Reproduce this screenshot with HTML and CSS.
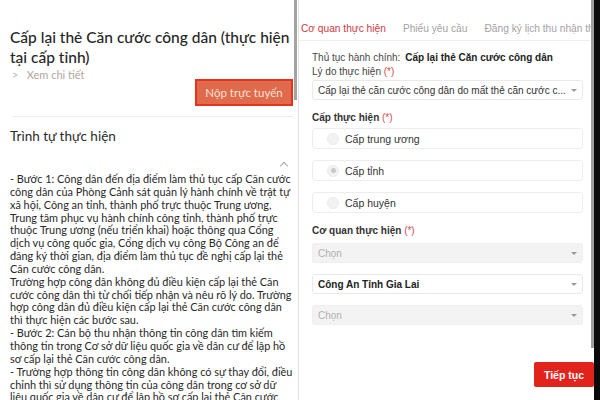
FILE: index.html
```html
<!DOCTYPE html>
<html lang="vi">
<head>
  <meta charset="UTF-8">
  <meta name="viewport" content="width=device-width, initial-scale=1.0">
  <title>Cấp lại thẻ Căn cước công dân</title>
  <link rel="stylesheet" href="styles.css">
</head>
<body>
  <div class="screen">
    <!-- Chi tiết thủ tục -->
    <section class="pane detail">
      <h1 class="detail-title">Cấp lại thẻ Căn cước công dân (thực hiện tại cấp tỉnh)</h1>
      <div class="head-row">
        <a class="more-link" href="#"><span class="more-caret">&gt;</span> Xem chi tiết</a>
        <button class="btn-submit">Nộp trực tuyến</button>
      </div>

      <h2 class="section-title">Trình tự thực hiện</h2>
      <div class="collapse-row"><span class="collapse-icon"></span></div>
      <div class="steps">
        <p>- Bước 1: Công dân đến địa điểm làm thủ tục cấp Căn cước<br>
        công dân của Phòng Cảnh sát quản lý hành chính về trật tự<br>
        xã hội, Công an tỉnh, thành phố trực thuộc Trung ương,<br>
        Trung tâm phục vụ hành chính công tỉnh, thành phố trực<br>
        thuộc Trung ương (nếu triển khai) hoặc thông qua Cổng<br>
        dịch vụ công quốc gia, Cổng dịch vụ công Bộ Công an để<br>
        đăng ký thời gian, địa điểm làm thủ tục đề nghị cấp lại thẻ<br>
        Căn cước công dân.</p>
        <p>Trường hợp công dân không đủ điều kiện cấp lại thẻ Căn<br>
        cước công dân thì từ chối tiếp nhận và nêu rõ lý do. Trường<br>
        hợp công dân đủ điều kiện cấp lại thẻ Căn cước công dân<br>
        thì thực hiện các bước sau.</p>
        <p>- Bước 2: Cán bộ thu nhận thông tin công dân tìm kiếm<br>
        thông tin trong Cơ sở dữ liệu quốc gia về dân cư để lập hồ<br>
        sơ cấp lại thẻ Căn cước công dân.</p>
        <p>- Trường hợp thông tin công dân không có sự thay đổi, điều<br>
        chỉnh thì sử dụng thông tin của công dân trong cơ sở dữ<br>
        liệu quốc gia về dân cư để lập hồ sơ cấp lại thẻ Căn cước</p>
      </div>
      <div class="scroll-thumb left-thumb"></div>
    </section>

    <!-- Form nộp hồ sơ -->
    <section class="pane form">
      <nav class="tabs">
        <span class="tab active">Cơ quan thực hiện</span>
        <span class="tab">Phiếu yêu cầu</span>
        <span class="tab">Đăng ký lịch thu nhận thông tin</span>
      </nav>

      <div class="form-body">
        <div class="info-line">Thủ tục hành chính: <b>Cấp lại thẻ Căn cước công dân</b></div>
        <label class="field-label">Lý do thực hiện <span class="req">(*)</span></label>
        <div class="select"><span class="select-text">Cấp lại thẻ căn cước công dân do mất thẻ căn cước c...</span><span class="caret"></span></div>

        <label class="field-label strong">Cấp thực hiện <span class="req">(*)</span></label>
        <div class="radio-list">
          <div class="radio-item"><span class="radio"></span>Cấp trung ương</div>
          <div class="radio-item"><span class="radio checked"></span>Cấp tỉnh</div>
          <div class="radio-item"><span class="radio"></span>Cấp huyện</div>
        </div>

        <label class="field-label strong">Cơ quan thực hiện <span class="req">(*)</span></label>
        <div class="select-list">
          <div class="select disabled"><span class="select-text">Chọn</span><span class="caret"></span></div>
          <div class="select"><span class="select-text value">Công An Tỉnh Gia Lai</span><span class="caret"></span></div>
          <div class="select disabled"><span class="select-text">Chọn</span><span class="caret"></span></div>
        </div>

        <div class="actions">
          <button class="btn-next">Tiếp tục</button>
        </div>
      </div>
      <div class="scroll-thumb right-thumb"></div>
    </section>

    <div class="edge"></div>
  </div>
</body>
</html>
```

FILE: styles.css
```css
body {
  margin: 0;
  padding: 0;
  background: #fff;
}
.screen {
  display: flex;
  width: 600px;
  height: 400px;
  overflow: hidden;
}
.pane {
  position: relative;
  height: 400px;
  overflow: hidden;
  box-sizing: border-box;
}

/* Pannello sinistro: dettaglio */
.detail {
  width: 298px;
  padding: 28px 8px 0 10px;
  font-family: Lato, "Open Sans", sans-serif;
  color: #2e2e2e;
}
.detail-title {
  margin: 0;
  font-size: 15.5px;
  line-height: 19.5px;
  font-weight: 500;
  color: #262626;
}
.head-row {
  display: flex;
  justify-content: space-between;
  align-items: flex-start;
  margin: 0 -3px 0 2px;
  padding-bottom: 10px;
  border-bottom: 1px solid #ececec;
}
.more-link {
  margin-left: -2px;
  font-size: 11px;
  line-height: 16px;
  color: #b2a6a0;
  text-decoration: none;
}
.more-caret {
  display: inline-block;
  width: 12px;
  padding-left: 2px;
  color: #b8b8b8;
}
.btn-submit {
  height: 27px;
  width: 98px;
  margin-top: 12px;
  padding: 0;
  border: 2px solid #e5331f;
  background: #df6a4c;
  color: #fbe2d6;
  font-family: Lato, sans-serif;
  font-size: 11.5px;
}
.section-title {
  margin: 10px 0 0;
  font-size: 13.5px;
  line-height: 18px;
  font-weight: 400;
  color: #2a2a2a;
}
.collapse-row {
  display: flex;
  justify-content: flex-end;
  height: 28px;
  padding-right: 3px;
}
.collapse-icon {
  width: 5px;
  height: 5px;
  margin-top: 18px;
  border-left: 1px solid #aaa;
  border-top: 1px solid #aaa;
  transform: rotate(45deg);
}
.steps {
  font-size: 10.9px;
  line-height: 12.85px;
  color: #282828;
  white-space: nowrap;
}
.steps p {
  margin: 0;
}
.scroll-thumb {
  position: absolute;
  top: 0;
  width: 3px;
  background: #a4a4a4;
}
.left-thumb {
  right: 1px;
  height: 100px;
}

/* Pannello destro: form */
.form {
  width: 296px;
  border-left: 1px solid #e2e2e2;
  font-family: "Liberation Sans", Arial, sans-serif;
  font-size: 10px;
  color: #333;
}
.tabs {
  display: flex;
  gap: 17px;
  height: 41px;
  padding: 22px 0 0 2px;
  box-sizing: border-box;
  border-bottom: 1px solid #efefef;
  white-space: nowrap;
  margin-right: 4px;
  font-size: 10.2px;
}
.tab {
  color: #a3a3a3;
  line-height: 13px;
}
.tab.active {
  color: #cf3a45;
}
.form-body {
  padding: 10px 11px 0 13px;
}
.info-line {
  line-height: 14px;
  color: #4a4a4a;
}
.info-line b {
  margin-left: 2px;
  color: #222;
}
.field-label {
  display: block;
  line-height: 14px;
  color: #444;
}
.field-label.strong {
  margin-top: 11px;
  font-weight: bold;
  color: #333;
}
.req {
  color: #d24a55;
  font-weight: normal;
}
.select {
  display: flex;
  align-items: center;
  height: 20px;
  margin-top: 1px;
  padding: 0 5px 0 5px;
  border: 1px solid #e9e9e9;
  border-radius: 3px;
  box-sizing: border-box;
  background: #fff;
}
.select-text {
  flex: 1;
  overflow: hidden;
  white-space: nowrap;
  color: #333;
}
.select-text.value {
  font-weight: bold;
  color: #222;
}
.select.disabled {
  background: #f3f3f3;
  border-color: #efefef;
}
.select.disabled .select-text {
  color: #b0b0b0;
}
.caret {
  flex: none;
  width: 0;
  height: 0;
  margin-left: 2px;
  border-left: 3px solid transparent;
  border-right: 3px solid transparent;
  border-top: 3px solid #9a9a9a;
}
.radio-list {
  display: flex;
  flex-direction: column;
  gap: 11px;
  margin-top: 3px;
}
.radio-item {
  display: flex;
  align-items: center;
  height: 21px;
  padding-left: 14px;
  border: 1px solid #ededed;
  border-radius: 3px;
  box-sizing: border-box;
  color: #333;
  font-size: 10.5px;
}
.radio {
  display: flex;
  align-items: center;
  justify-content: center;
  width: 10px;
  height: 10px;
  margin-right: 6px;
  border-radius: 50%;
  background: #f2f2f2;
  border: 1px solid #ececec;
}
.radio.checked::after {
  content: "";
  width: 5px;
  height: 5px;
  border-radius: 50%;
  background: #c9c9c9;
}
.select-list {
  display: flex;
  flex-direction: column;
  gap: 11px;
  margin-top: 5px;
}
.select-list .select {
  margin-top: 0;
}
.actions {
  display: flex;
  justify-content: flex-end;
  margin-top: 37px;
  margin-right: -11px;
}
.btn-next {
  width: 60px;
  height: 25px;
  padding: 0;
  border: none;
  border-radius: 2px;
  background: #e2231b;
  color: #fff;
  font-family: "Liberation Sans", Arial, sans-serif;
  font-size: 10.5px;
  font-weight: bold;
}
.right-thumb {
  right: 0;
  height: 348px;
  background: #9c9c9c;
}
.edge {
  width: 6px;
  height: 400px;
  background: #0a0a0a;
}
```
